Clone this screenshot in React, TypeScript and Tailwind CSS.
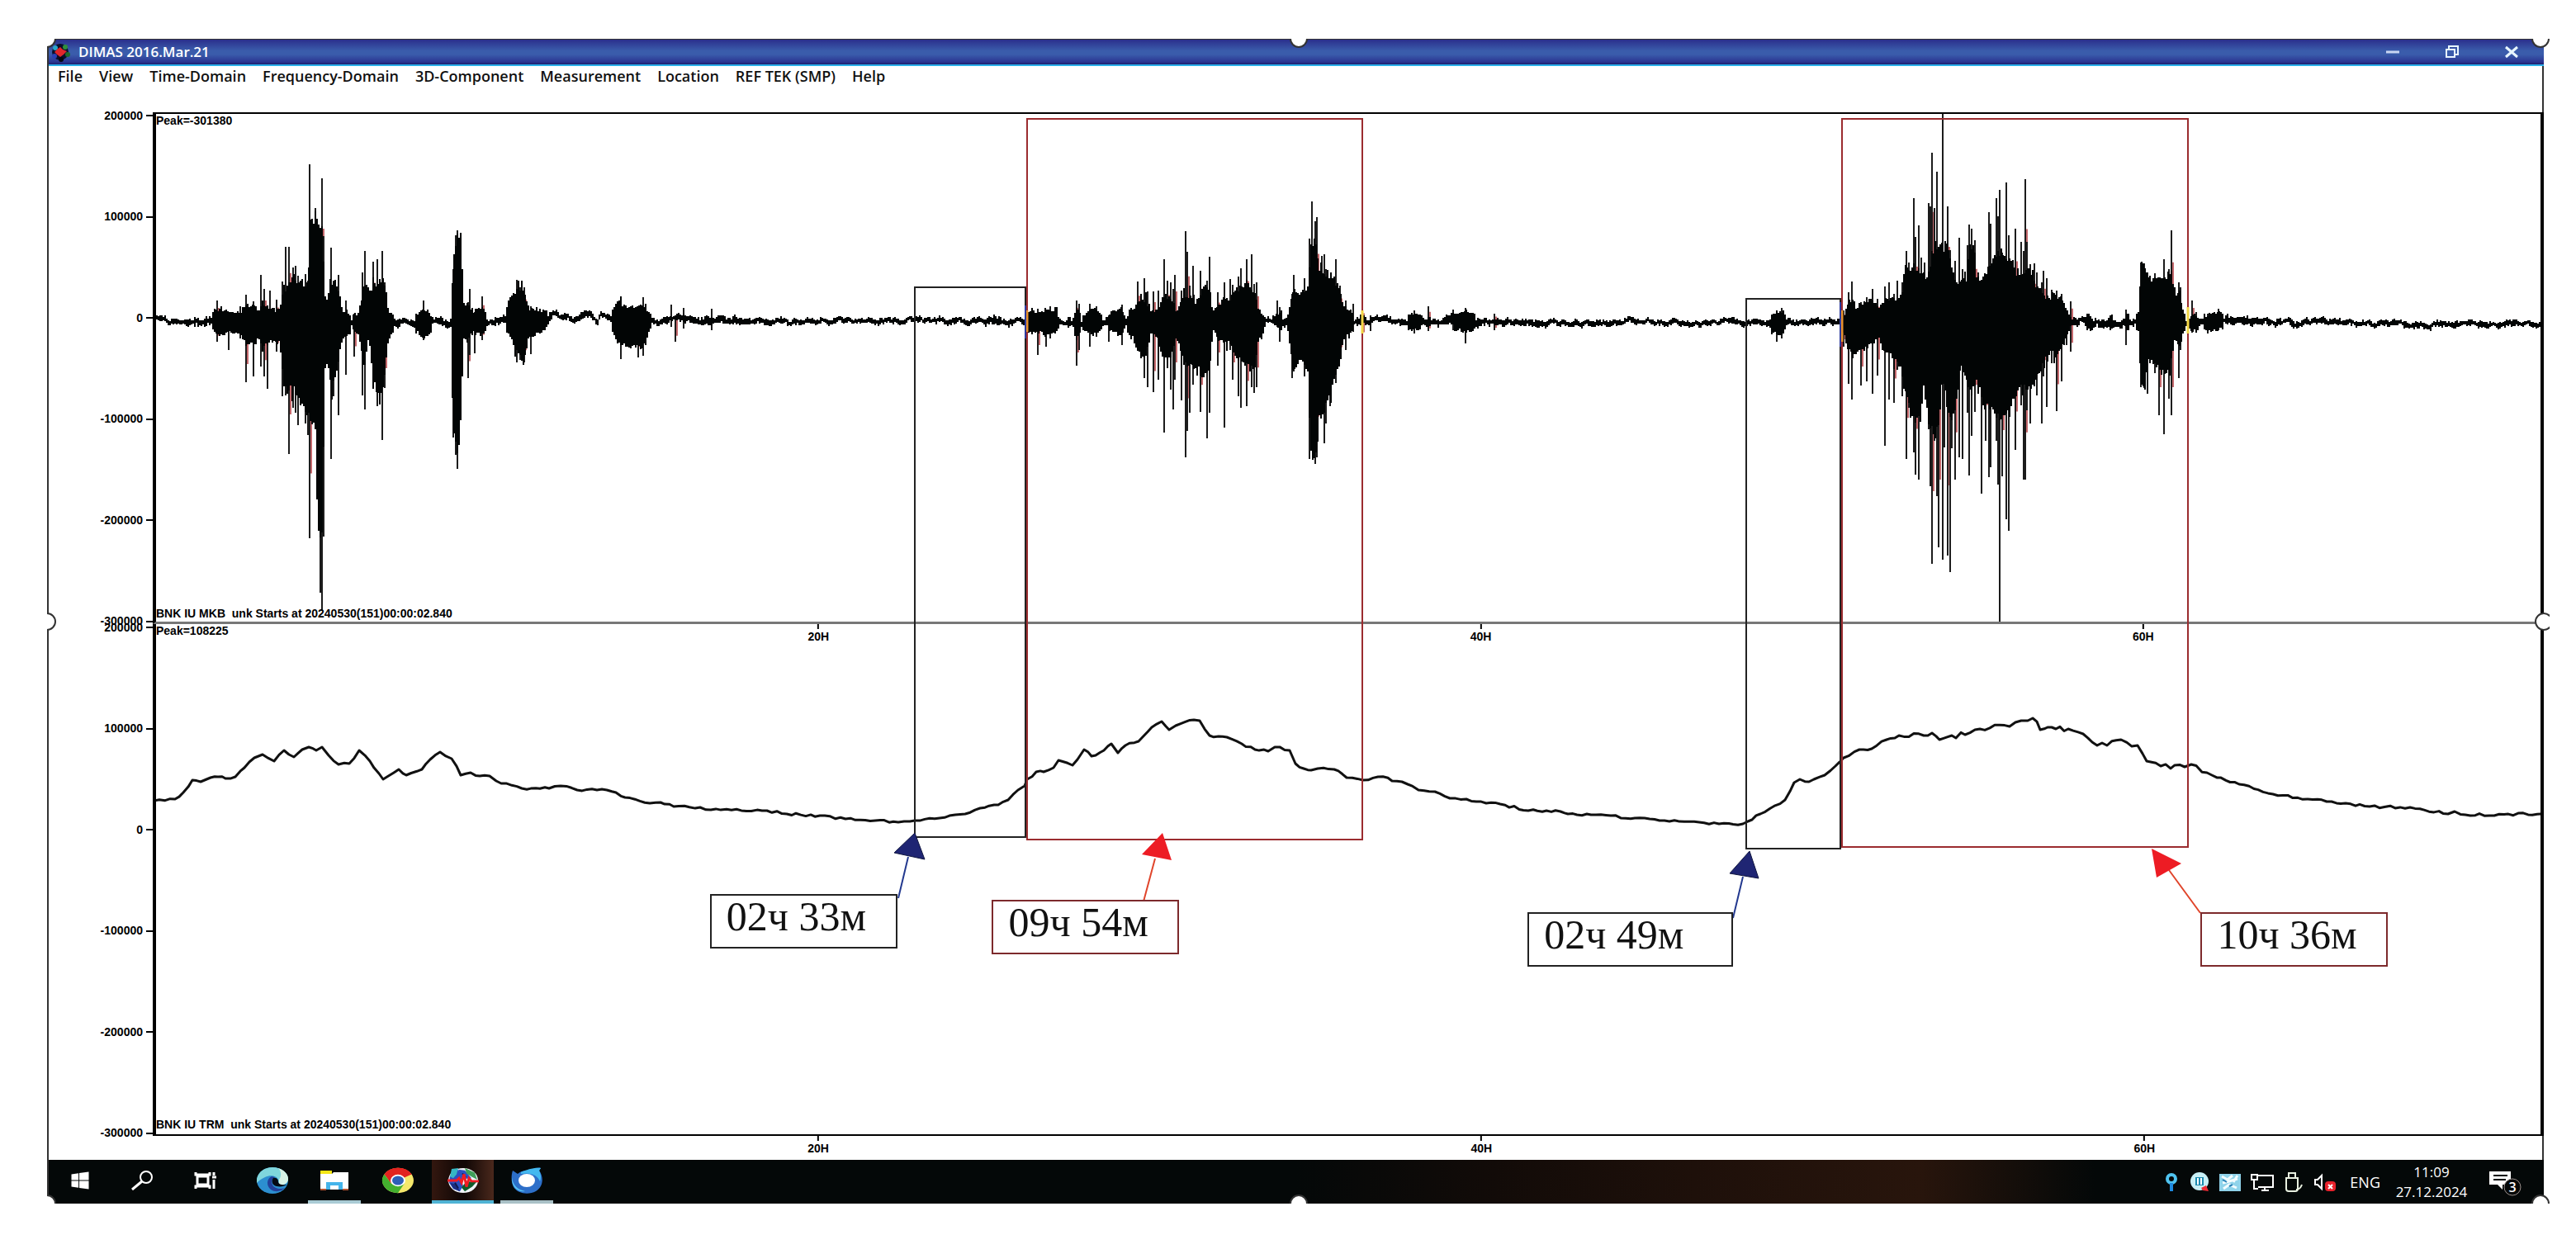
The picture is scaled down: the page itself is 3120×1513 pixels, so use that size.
import type { ReactNode } from 'react';
import { FaWindows } from 'react-icons/fa';

const MENU_ITEMS = [
  'File',
  'View',
  'Time-Domain',
  'Frequency-Domain',
  '3D-Component',
  'Measurement',
  'Location',
  'REF TEK (SMP)',
  'Help',
];

const Y_TICKS = ['200000', '100000', '0', '-100000', '-200000', '-300000'];
const X_TICKS = ['20H', '40H', '60H'];

type Range = [x: number, top: number, bottom: number];
type Point = [x: number, y: number];

// envelope of the solid part of the velocity trace
const ENVELOPE: Range[] = [
  [187, 384, 388], [205, 388, 392], [232, 385, 394], [256, 382, 396], [263, 378, 404], [277, 380, 400], [291, 380, 402],
  [298, 372, 414], [307, 372, 414], [313, 378, 408], [318, 374, 416], [326, 374, 412], [333, 378, 412], [339, 378, 412],
  [342, 362, 446], [347, 354, 470], [352, 346, 464], [356, 340, 466], [364, 346, 480], [373, 348, 500], [376, 280, 496],
  [382, 272, 516], [385, 274, 624], [391, 290, 634], [393, 364, 440], [398, 362, 440], [401, 350, 466], [407, 350, 450],
  [412, 364, 420], [416, 380, 408], [426, 384, 398], [434, 382, 402], [437, 370, 416], [441, 346, 450], [447, 353, 400],
  [451, 352, 452], [458, 350, 474], [463, 344, 474], [467, 352, 440], [470, 376, 412], [477, 386, 397], [500, 386, 396],
  [506, 383, 400], [513, 376, 410], [520, 380, 402], [525, 387, 395], [546, 386, 394], [549, 330, 516], [554, 286, 542],
  [559, 296, 486], [561, 366, 408], [567, 374, 404], [574, 380, 400], [583, 374, 404], [591, 386, 393], [612, 382, 394],
  [617, 364, 406], [626, 356, 420], [635, 356, 430], [641, 376, 406], [657, 378, 400], [664, 380, 394], [670, 379, 384],
  [682, 380, 386], [695, 385, 390], [713, 376, 384], [724, 388, 393], [728, 376, 382], [739, 382, 390], [747, 368, 414],
  [761, 374, 416], [779, 372, 418], [787, 381, 398], [792, 387, 392], [812, 382, 392], [840, 384, 394], [900, 384, 391],
  [960, 387, 392], [1040, 386, 390], [1120, 386, 391], [1190, 386, 390], [1201, 382, 394], [1214, 385, 392], [1240, 386, 392],
  [1246, 380, 398], [1265, 380, 402], [1279, 377, 400], [1284, 386, 394], [1300, 384, 398], [1304, 376, 408], [1310, 384, 396],
  [1320, 378, 402], [1329, 378, 402], [1338, 386, 393], [1346, 381, 398], [1358, 376, 404], [1364, 385, 395], [1372, 378, 406],
  [1378, 368, 424], [1388, 366, 430], [1393, 380, 400], [1402, 378, 408], [1408, 362, 430], [1418, 364, 430], [1424, 380, 408],
  [1430, 370, 420], [1436, 360, 436], [1444, 362, 440], [1449, 376, 440], [1456, 354, 450], [1465, 354, 446], [1469, 380, 398],
  [1474, 376, 406], [1482, 366, 414], [1490, 366, 412], [1498, 354, 430], [1512, 350, 438], [1519, 356, 444], [1525, 378, 408],
  [1530, 384, 400], [1538, 388, 392], [1547, 382, 396], [1553, 382, 398], [1559, 388, 392], [1563, 370, 424], [1567, 362, 440],
  [1578, 358, 432], [1585, 350, 450], [1587, 300, 540], [1594, 298, 548], [1598, 330, 496], [1606, 336, 488], [1613, 342, 466],
  [1621, 348, 444], [1628, 374, 408], [1640, 382, 396], [1652, 382, 396], [1657, 386, 392], [1695, 387, 392], [1706, 382, 398],
  [1722, 382, 396], [1735, 384, 393], [1750, 384, 394], [1775, 380, 400], [1800, 386, 394], [1840, 387, 394], [1880, 388, 394],
  [1940, 388, 393], [2000, 387, 391], [2060, 389, 394], [2137, 387, 392], [2143, 384, 396], [2153, 379, 404], [2163, 383, 397],
  [2168, 388, 392], [2228, 386, 393], [2234, 382, 404], [2239, 368, 422], [2247, 376, 424], [2256, 370, 420], [2266, 366, 414],
  [2276, 374, 408], [2283, 368, 424], [2294, 366, 430], [2303, 364, 440], [2307, 336, 470], [2318, 330, 500], [2326, 332, 500],
  [2330, 340, 456], [2335, 336, 500], [2343, 306, 520], [2349, 304, 500], [2353, 306, 450], [2358, 306, 480], [2364, 326, 500],
  [2370, 352, 480], [2375, 342, 440], [2382, 344, 456], [2386, 300, 470], [2392, 310, 460], [2395, 352, 454], [2402, 340, 484],
  [2411, 326, 490], [2418, 312, 500], [2427, 310, 502], [2436, 324, 480], [2442, 340, 470], [2450, 342, 460], [2456, 330, 466],
  [2463, 344, 460], [2472, 356, 444], [2481, 366, 424], [2492, 364, 424], [2499, 366, 414], [2504, 382, 400], [2512, 386, 394],
  [2520, 386, 393], [2530, 382, 398], [2540, 386, 394], [2558, 382, 397], [2566, 388, 392], [2576, 382, 398], [2586, 386, 395],
  [2591, 380, 402], [2593, 322, 464], [2598, 334, 464], [2603, 342, 424], [2612, 342, 440], [2622, 340, 450], [2630, 334, 430],
  [2634, 360, 408], [2640, 358, 416], [2644, 378, 402], [2650, 386, 394], [2656, 382, 400], [2664, 384, 396], [2674, 384, 400],
  [2688, 379, 397], [2700, 386, 395], [2720, 385, 395], [2760, 387, 394], [2820, 388, 393], [2900, 389, 394], [2980, 389, 395],
  [3079, 390, 394],
];

// single columns that reach past the envelope
const SPIKES: Range[] = [
  [263, 364, 414], [277, 378, 424], [291, 371, 410], [298, 357, 463], [307, 365, 456], [316, 333, 444], [320, 350, 456],
  [324, 373, 471], [327, 352, 404], [335, 363, 426], [342, 341, 480], [346, 299, 479], [350, 299, 550], [355, 324, 494],
  [358, 322, 500], [361, 334, 515], [370, 332, 513], [373, 340, 527], [375, 199, 652], [382, 252, 520], [388, 276, 718],
  [390, 216, 740], [392, 286, 650], [401, 300, 556], [404, 340, 480], [410, 333, 503], [419, 364, 454], [429, 380, 432],
  [439, 330, 479], [442, 304, 496], [452, 317, 466], [457, 314, 492], [463, 304, 533], [466, 342, 470], [513, 364, 412],
  [549, 326, 530], [552, 285, 551], [554, 279, 568], [558, 295, 490], [567, 366, 458], [569, 350, 430], [575, 378, 428],
  [584, 359, 412], [626, 339, 439], [630, 348, 436], [635, 348, 439], [643, 371, 429], [752, 359, 435], [773, 374, 433],
  [779, 360, 431], [813, 369, 396], [818, 382, 414], [828, 373, 398], [862, 374, 400], [1257, 374, 430], [1267, 376, 420],
  [1272, 371, 410], [1304, 364, 443], [1307, 368, 424], [1320, 368, 420], [1328, 371, 408], [1343, 382, 414], [1359, 369, 418],
  [1378, 341, 424], [1386, 337, 458], [1390, 353, 469], [1397, 353, 475], [1403, 352, 460], [1410, 314, 524], [1414, 340, 446],
  [1418, 342, 472], [1421, 350, 496], [1423, 333, 460], [1431, 352, 485], [1436, 280, 554], [1438, 305, 522], [1441, 346, 500],
  [1445, 322, 466], [1454, 328, 499], [1462, 340, 531], [1465, 311, 500], [1475, 354, 443], [1483, 342, 518], [1490, 338, 424],
  [1493, 345, 460], [1500, 335, 480], [1503, 325, 494], [1510, 314, 492], [1516, 308, 469], [1519, 344, 476], [1522, 342, 469],
  [1547, 364, 396], [1550, 372, 414], [1565, 356, 458], [1567, 333, 450], [1580, 337, 456], [1586, 289, 556], [1589, 244, 542],
  [1593, 268, 562], [1595, 263, 554], [1601, 310, 492], [1604, 308, 537], [1606, 326, 513], [1611, 340, 492], [1618, 314, 464],
  [1623, 346, 434], [1630, 364, 424], [1639, 368, 402], [1650, 374, 408], [1660, 382, 401], [1713, 376, 404], [1730, 371, 401],
  [1760, 375, 400], [1775, 373, 416], [1810, 380, 400], [2152, 376, 414], [2158, 373, 410], [2233, 376, 420], [2239, 354, 465],
  [2243, 341, 484], [2254, 366, 467], [2261, 360, 462], [2268, 350, 477], [2274, 362, 455], [2283, 347, 540], [2288, 342, 484],
  [2294, 356, 488], [2298, 340, 448], [2304, 342, 480], [2309, 304, 556], [2312, 318, 494], [2318, 240, 548], [2320, 287, 575],
  [2324, 273, 581], [2327, 312, 470], [2331, 318, 446], [2336, 246, 520], [2338, 250, 589], [2340, 185, 683], [2343, 252, 534],
  [2346, 208, 601], [2348, 304, 663], [2353, 138, 678], [2355, 306, 542], [2359, 250, 673], [2362, 303, 693], [2364, 326, 543],
  [2368, 316, 581], [2373, 288, 554], [2377, 326, 556], [2383, 297, 500], [2385, 272, 576], [2388, 277, 528], [2392, 291, 499],
  [2396, 330, 454], [2400, 340, 598], [2405, 334, 534], [2409, 257, 578], [2411, 271, 566], [2418, 240, 534], [2420, 262, 587],
  [2422, 230, 753], [2425, 306, 577], [2430, 221, 629], [2433, 285, 643], [2441, 277, 545], [2448, 293, 491], [2451, 304, 581],
  [2453, 217, 581], [2455, 293, 497], [2459, 320, 513], [2464, 319, 468], [2467, 330, 479], [2473, 342, 513], [2475, 328, 456],
  [2479, 337, 493], [2485, 351, 440], [2491, 352, 498], [2497, 356, 462], [2503, 380, 418], [2508, 365, 426], [2575, 375, 418],
  [2593, 318, 469], [2597, 319, 470], [2601, 330, 477], [2610, 331, 452], [2615, 336, 503], [2621, 314, 526], [2627, 326, 483],
  [2630, 279, 503], [2639, 342, 458], [2641, 348, 424], [2655, 364, 403], [2660, 378, 402], [2674, 380, 404], [2687, 374, 400],
];

const TREMOR: Point[] = [
  [187, 970], [212, 968], [222, 960], [233, 945], [243, 947], [255, 942], [264, 941], [273, 943], [285, 941], [296, 930],
  [308, 918], [318, 914], [332, 922], [344, 909], [356, 917], [366, 908], [374, 905], [383, 909], [390, 905], [398, 915],
  [410, 926], [423, 925], [435, 909], [448, 922], [464, 944], [483, 932], [492, 939], [511, 932], [521, 920], [533, 911],
  [547, 919], [558, 939], [570, 936], [581, 940], [593, 940], [601, 946], [632, 955], [665, 955], [679, 952], [699, 957],
  [735, 957], [757, 966], [787, 973], [800, 972], [816, 977], [848, 978], [861, 981], [929, 982], [953, 986], [993, 988],
  [1024, 992], [1060, 994], [1088, 996], [1102, 995], [1138, 991], [1169, 986], [1187, 979], [1209, 975], [1221, 969], [1233, 957],
  [1241, 952], [1244, 944], [1255, 935], [1264, 935], [1276, 930], [1282, 921], [1299, 927], [1305, 920], [1313, 908], [1322, 916],
  [1337, 909], [1346, 901], [1354, 912], [1363, 903], [1379, 898], [1395, 881], [1407, 874], [1416, 884], [1424, 879], [1446, 872],
  [1453, 873], [1465, 891], [1486, 893], [1504, 901], [1520, 908], [1536, 910], [1544, 905], [1562, 909], [1569, 925], [1579, 931],
  [1588, 933], [1596, 931], [1616, 932], [1631, 942], [1651, 945], [1669, 941], [1698, 947], [1718, 957], [1738, 959], [1756, 967],
  [1776, 968], [1800, 973], [1817, 974], [1851, 982], [1890, 983], [1899, 986], [1933, 987], [2016, 994], [2082, 998], [2111, 998],
  [2117, 995], [2132, 986], [2162, 969], [2173, 948], [2180, 944], [2191, 947], [2210, 939], [2223, 928], [2233, 918], [2252, 908],
  [2267, 907], [2285, 896], [2300, 891], [2330, 891], [2340, 888], [2349, 896], [2364, 891], [2380, 890], [2398, 883], [2434, 880],
  [2448, 873], [2456, 873], [2462, 870], [2471, 884], [2480, 881], [2490, 883], [2505, 883], [2523, 889], [2534, 899], [2552, 903],
  [2569, 896], [2589, 903], [2600, 922], [2617, 928], [2646, 929], [2654, 926], [2679, 939], [2712, 950], [2753, 962], [2795, 968],
  [2870, 977], [2919, 978], [2965, 986], [2973, 983], [2986, 987], [3079, 986],
];

function makeRandom(seed: number) {
  let s = seed;
  return () => {
    s = (s * 1664525 + 1013904223) % 4294967296;
    return s / 4294967296;
  };
}

function buildVelocityPath() {
  const rand = makeRandom(21);
  let d = '';
  let k = 0;
  let drift = 0;
  for (let x = 188; x < 3078; x += 2) {
    while (k < ENVELOPE.length - 2 && ENVELOPE[k + 1][0] <= x) k++;
    const [x0, t0, b0] = ENVELOPE[k];
    const [x1, t1, b1] = ENVELOPE[k + 1];
    const f = (x - x0) / (x1 - x0);
    const top = t0 + (t1 - t0) * f;
    const bottom = b0 + (b1 - b0) * f;
    const size = bottom - top;
    drift = drift * 0.7 + (rand() - 0.5) * 4;
    if (size <= 14) {
      // quiet stretches are a thin wandering line
      const mid = (top + bottom) / 2 + drift;
      const half = 2 + rand() * size * 0.4;
      d += `M${x} ${Math.round(mid - half)}V${Math.round(mid + half)}`;
      continue;
    }
    const burst = rand() > 0.78 ? 0.22 : 0.06;
    const up = rand() * Math.min(16, size * burst + 3);
    const down = rand() * Math.min(22, size * burst + 3);
    d += `M${x} ${Math.round(top - up)}V${Math.round(bottom + down)}`;
  }
  return d;
}

function buildTremorPath() {
  const rand = makeRandom(5);
  let d = `M${TREMOR[0][0]} ${TREMOR[0][1]}`;
  for (let i = 1; i < TREMOR.length; i++) {
    const [x0, y0] = TREMOR[i - 1];
    const [x1, y1] = TREMOR[i];
    const steps = Math.max(1, Math.round((x1 - x0) / 6));
    const wobble = x0 > 2290 && x0 < 2660 ? 7 : 3;
    for (let j = 1; j <= steps; j++) {
      const f = j / steps;
      const noise = j < steps ? (rand() - 0.5) * wobble : 0;
      d += `L${Math.round(x0 + (x1 - x0) * f)} ${(y0 + (y1 - y0) * f + noise).toFixed(1)}`;
    }
  }
  return d;
}

const spikePath = (list: Range[]) => list.map(([x, a, b]) => `M${x} ${a}V${b}`).join('');

const VELOCITY_PATH = buildVelocityPath();
const TREMOR_PATH = buildTremorPath();
const SPIKE_PATH = spikePath(SPIKES);
const RED_PATH = spikePath(
  SPIKES.filter((_, i) => i % 3 === 0).map(([x, a, b]) => [x + 2, a + (390 - a) * 0.35, b - (b - 390) * 0.3]),
);

function YAxis() {
  return (
    <div className="flex w-[126px] shrink-0 flex-col justify-between pt-1 pb-[3px]">
      {Y_TICKS.map((tick) => (
        <div key={tick} className="flex h-0 items-center justify-end gap-1">
          <span>{tick}</span>
          <span className="h-[2px] w-2 bg-black" />
        </div>
      ))}
    </div>
  );
}

function XAxis() {
  return (
    <div className="flex">
      {X_TICKS.map((tick) => (
        <div key={tick} className="flex w-[27.78%] justify-end">
          <div className="flex translate-x-1/2 flex-col items-center">
            <span className="h-[6px] w-[2px] bg-black" />
            <span className="leading-[18px]">{tick}</span>
          </div>
        </div>
      ))}
    </div>
  );
}

interface TraceProps {
  peak: string;
  station: string;
  viewBox: string;
  frame: string;
  children: ReactNode;
  axis?: ReactNode;
}

function Trace({ peak, station, viewBox, frame, children, axis }: TraceProps) {
  return (
    <section className="flex">
      <YAxis />
      <div className={`relative flex flex-1 flex-col justify-between border-r-4 border-l-4 border-black ${frame}`}>
        <svg className="absolute inset-0 h-full w-full" viewBox={viewBox} preserveAspectRatio="none" aria-hidden="true">
          {children}
        </svg>
        <div className="relative">
          {axis && <div className="absolute inset-x-0 top-0">{axis}</div>}
          <div className="leading-[16px]">{peak}</div>
        </div>
        <div className="relative leading-[16px] whitespace-pre">{station}</div>
      </div>
    </section>
  );
}

function Annotations() {
  return (
    <div className="absolute inset-y-0 right-0 left-[126px]">
      <svg className="absolute inset-0 h-full w-full" viewBox="185 136 2896 1240" preserveAspectRatio="none" aria-hidden="true">
        <g fill="none" strokeWidth="2">
          <path d="M1108 348H1242V1014H1108Z M2115 362H2229V1028H2115Z" stroke="#222" />
          <path d="M1244 144H1650V1017H1244Z M2231 144H2650V1026H2231Z" stroke="#9b2c2f" />
          <path d="M1244 376V402M2231 376V414" stroke="#e8912d" strokeWidth="3" />
          <path d="M1650 376V404M2650 372V404" stroke="#f2d544" strokeWidth="3" />
          <path d="M1242 370V410M2229 366V420" stroke="#2c3a9c" />
          <path d="M1100 1038L1088 1088M2111 1062L2099 1112" stroke="#23398f" />
          <path d="M1399 1040L1385 1092M2627 1054L2665 1106" stroke="#e0452b" />
        </g>
        <path d="M1108 1009L1083 1033L1120 1041Z M2119 1031L2095 1058L2130 1064Z" fill="#1f2573" stroke="#10163f" />
        <path d="M1408 1009L1383 1035L1419 1042Z M2606 1028L2642 1046L2612 1063Z" fill="#ed1c24" />
      </svg>
      <Duration className="top-[947px] left-[23.3%] w-[227px] border-[#222]">02ч 33м</Duration>
      <Duration className="top-[954px] left-[35.1%] w-[227px] border-[#7d2a2c]">09ч 54м</Duration>
      <Duration className="top-[969px] left-[57.5%] w-[249px] border-[#222]">02ч 49м</Duration>
      <Duration className="top-[969px] left-[85.65%] w-[227px] border-[#7d2a2c]">10ч 36м</Duration>
    </div>
  );
}

function Duration({ className, children }: { className: string; children: ReactNode }) {
  return (
    <div
      className={`absolute h-[66px] border-2 bg-white pl-[18px] font-['Liberation_Serif',serif] text-[50px] leading-[50px] font-normal whitespace-nowrap text-[#111] ${className}`}
    >
      {children}
    </div>
  );
}

function GlobeIcon({ className }: { className: string }) {
  return (
    <svg className={className} viewBox="0 0 40 34" preserveAspectRatio="none" aria-hidden="true">
      <ellipse cx="20" cy="17" rx="18" ry="16" fill="#f1f4f8" />
      <path d="M4 12L8 5L12 2L20 9L18 17L20 24L16 31L8 28L3 20Z" fill="#2a50c0" />
      <path d="M4 12L6 2L14 1L12 9L8 14Z" fill="#35b7c4" />
      <path d="M14 3L22 4L30 14L22 15L17 9Z" fill="#2a50c0" />
      <path d="M22 1L34 7L37 16L30 12L24 8Z" fill="#3f9f5a" />
      <path d="M24 18L36 19L31 25L22 31L18 26Z" fill="#0f5c2b" />
      <path d="M4 20L12 22L16 31L8 27Z" fill="#1b2c80" />
      <path d="M19 8L23 13M10 20L14 27" stroke="#101a4d" strokeWidth="2" />
      <path d="M1 17H12L15 14L18 20L21 9L24 25L27 14L30 18H39" fill="none" stroke="#ef1c24" strokeWidth="3" />
    </svg>
  );
}

function DimasLogo() {
  return (
    <svg className="h-6 w-7" viewBox="0 0 28 24" aria-hidden="true">
      <circle cx="14" cy="12" r="10" fill="#0a0f2c" />
      <circle cx="8" cy="7" r="3" fill="#2aa6c9" />
      <circle cx="20" cy="6" r="3" fill="#2f8f3c" />
      <circle cx="23" cy="15" r="3" fill="#1f6a2a" />
      <circle cx="7" cy="17" r="3" fill="#2a3fb5" />
      <circle cx="15" cy="21" r="3" fill="#05070f" />
      <path d="M7 12L11 8L14 6L17 9L22 11L18 15L14 18L10 15Z" fill="#e0262b" />
    </svg>
  );
}

function EdgeIcon() {
  return (
    <svg className="h-8 w-10" viewBox="0 0 40 32" preserveAspectRatio="none" aria-hidden="true">
      <ellipse cx="20" cy="16" rx="19" ry="16" fill="#2c8fd0" />
      <path d="M1 14C3 5 11 0 20 0C31 0 39 7 39 14C39 20 33 22 29 21C26 20 28 18 27 15C25 10 17 9 11 12C6 14 3 17 1 19Z" fill="#7fd6dc" />
      <path d="M27 1C35 4 39 9 39 14C39 20 33 22 29 21C27 20 28 18 28 15C31 11 31 5 27 1Z" fill="#d8f3e6" />
      <path d="M19 11C13 14 12 22 18 27C24 31 31 29 35 25C30 27 22 26 20 21C18 17 20 14 23 12Z" fill="#23409a" />
      <path d="M21 13C18 17 20 22 25 23C30 24 34 23 38 21C32 22 27 21 27 17C27 14 24 12 21 13Z" fill="#050a14" />
    </svg>
  );
}

function ExplorerIcon() {
  return (
    <svg className="h-6 w-9" viewBox="0 0 36 24" preserveAspectRatio="none" aria-hidden="true">
      <path d="M1 0H15V6H1Z" fill="#f5e616" />
      <path d="M1 4H15L17 2H35V23H1Z" fill="#fff" />
      <path d="M8 23V14H28V23H23V18H13V23Z" fill="#44b4ea" />
      <path d="M1 22H8V24H1ZM28 22H35V24H28Z" fill="#b5532f" />
    </svg>
  );
}

function ChromeIcon() {
  return (
    <svg className="h-8 w-10" viewBox="0 0 40 40" preserveAspectRatio="none" aria-hidden="true">
      <circle cx="20" cy="20" r="19" fill="#f5e86b" />
      <path d="M20 20L3.500 10.500A19 19 0 0 1 36.500 10.500Z" fill="#e2231f" />
      <path d="M20 11H36.800A19 19 0 0 0 3.500 10.500L12 25Z" fill="#e2231f" />
      <path d="M3.500 10.500A19 19 0 0 0 20 39L28 24L12 25Z" fill="#43b02f" />
      <circle cx="20" cy="20" r="9" fill="#fff" />
      <circle cx="20" cy="20" r="7" fill="#2d5fb8" />
    </svg>
  );
}

function ThunderbirdIcon() {
  return (
    <svg className="h-8 w-10" viewBox="0 0 40 32" preserveAspectRatio="none" aria-hidden="true">
      <path d="M3 4L9 8C14 3 22 4 25 3C29 1 35 0 37 1L35 4C41 12 40 24 31 29C22 34 9 32 4 24C1 18 1 10 3 4Z" fill="#2d6fc9" />
      <path d="M13 6C20 3 29 0 37 1L35 4C37 8 38 13 36 17C33 10 26 6 13 8Z" fill="#43b8ef" />
      <path d="M2 12C3 22 9 27 18 29C10 31 1 24 2 12Z" fill="#55c4f4" />
      <ellipse cx="20" cy="16" rx="10" ry="8" fill="#fff" />
    </svg>
  );
}

function SearchIcon() {
  return (
    <svg className="h-6 w-7" viewBox="0 0 28 24" fill="none" stroke="#fff" strokeWidth="2" aria-hidden="true">
      <circle cx="18" cy="8" r="7" />
      <path d="M13 13L1 23" strokeWidth="3" />
    </svg>
  );
}

function TaskViewIcon() {
  return (
    <svg className="h-[22px] w-7" viewBox="0 0 28 22" fill="none" stroke="#fff" strokeWidth="2" aria-hidden="true">
      <path d="M4 6H17V16H4ZM2 1V4H19V1M2 21V18H19V21M24 1V5M24 10V21" strokeWidth="3" />
      <path d="M22 7H27" strokeWidth="3" />
    </svg>
  );
}

interface TaskButtonProps {
  label: string;
  className: string;
  children: ReactNode;
}

function TaskButton({ label, className, children }: TaskButtonProps) {
  return (
    <button type="button" aria-label={label} className={`flex h-full items-center justify-center border-b-4 ${className}`}>
      {children}
    </button>
  );
}

function Tray() {
  return (
    <div className="flex h-full items-center pr-[26px] text-white">
      <div className="flex items-center gap-3">
        <svg className="h-6 w-5" viewBox="0 0 20 24" fill="none" stroke="#4fc3f0" strokeWidth="4" aria-hidden="true">
          <circle cx="10" cy="8" r="5" />
          <path d="M10 13V23" stroke="#1e8be0" />
        </svg>
        <svg className="h-6 w-6" viewBox="0 0 24 24" aria-hidden="true">
          <circle cx="12" cy="11" r="11" fill="#c8f0f6" />
          <path d="M7 6H17V16H7Z" fill="#1d8bb0" />
          <path d="M10 7V15M14 7V15" stroke="#fff" strokeWidth="2" />
          <path d="M14 19L20 16L23 23L16 22Z" fill="#ee2b34" />
        </svg>
        <svg className="h-6 w-[26px]" viewBox="0 0 26 24" aria-hidden="true">
          <path d="M0 2H26V23H0Z" fill="#8fd3ea" />
          <path d="M3 5L10 9L16 4M4 13L12 11L22 8M5 20L12 15L21 19M22 4L17 12" fill="none" stroke="#f2fcff" strokeWidth="3" />
          <path d="M12 17L16 15M4 9L9 12" stroke="#2b83b8" strokeWidth="2" />
        </svg>
        <svg className="h-6 w-7" viewBox="0 0 28 24" fill="none" stroke="#fff" strokeWidth="2" aria-hidden="true">
          <path d="M9 4H27V18H9M13 22H22M17 18V22M1 3H8V9H1ZM4 9V20H9" />
        </svg>
        <svg className="h-7 w-6" viewBox="0 0 24 28" fill="none" stroke="#e8f0e0" strokeWidth="2" aria-hidden="true">
          <path d="M6 9V3H14V9M3 9H17V22Q17 25 14 25H6Q3 25 3 22ZM15 23Q20 23 22 17" />
        </svg>
        <svg className="h-6 w-7" viewBox="0 0 28 24" aria-hidden="true">
          <path d="M2 9H5L10 4V20L5 15H2Z" fill="none" stroke="#fff" strokeWidth="2" />
          <rect x="14" y="11" width="13" height="12" rx="4" fill="#e8222c" />
          <path d="M18 15L23 20M23 15L18 20" stroke="#fff" strokeWidth="2" />
        </svg>
      </div>
      <button type="button" className="ml-4 text-[18px] leading-6">
        ENG
      </button>
      <button type="button" className="ml-4 w-[92px] text-center text-[17px] leading-6">
        <span className="block">11:09</span>
        <span className="block">27.12.2024</span>
      </button>
      <button type="button" aria-label="Notifications" className="ml-6">
        <svg className="h-[34px] w-10" viewBox="0 0 40 34" aria-hidden="true">
          <path d="M0 4H26V20H16V26L10 20H0Z" fill="#fff" />
          <path d="M5 9H22M5 14H20" stroke="#050808" strokeWidth="2" />
          <circle cx="28" cy="23" r="10" fill="#050808" stroke="#9a8f8c" strokeWidth="1" />
          <text x="28" y="29" textAnchor="middle" fontSize="16" fontWeight="600" fill="#fff">
            3
          </text>
        </svg>
      </button>
    </div>
  );
}

function Taskbar() {
  return (
    <footer className="flex h-[53px] items-center justify-between bg-[#040808] bg-[linear-gradient(90deg,transparent_50%,#120b08_58%,#1e100a_66%,#28150c_75%,transparent_82%)]">
      <div className="flex h-full">
        <TaskButton label="Start" className="w-[75px] border-transparent">
          <FaWindows className="h-6 w-[26px] text-white" />
        </TaskButton>
        <TaskButton label="Search" className="w-[78px] border-transparent">
          <SearchIcon />
        </TaskButton>
        <TaskButton label="Task view" className="w-[74px] border-transparent">
          <TaskViewIcon />
        </TaskButton>
        <TaskButton label="Microsoft Edge" className="w-[87px] border-transparent">
          <EdgeIcon />
        </TaskButton>
        <TaskButton label="File Explorer" className="w-[64px] border-[#a9cbd4]">
          <ExplorerIcon />
        </TaskButton>
        <TaskButton label="Google Chrome" className="w-[86px] border-transparent pl-1">
          <ChromeIcon />
        </TaskButton>
        <TaskButton label="DIMAS" className="w-[75px] border-[#4fb3d4] bg-[linear-gradient(90deg,#33170f,#120806_45%,#120806_55%,#4a281c)]">
          <GlobeIcon className="h-8 w-10" />
        </TaskButton>
        <TaskButton label="Thunderbird" className="ml-2 w-[64px] border-[#a9c0c6]">
          <ThunderbirdIcon />
        </TaskButton>
      </div>
      <Tray />
    </footer>
  );
}

const HANDLES = [
  'top-0 left-0 -translate-x-1/2 -translate-y-1/2',
  'top-0 left-1/2 -translate-x-1/2 -translate-y-1/2',
  'top-0 right-0 -translate-y-1/2',
  'top-1/2 left-0 -translate-x-1/2 -translate-y-1/2',
  'top-1/2 right-0 translate-x-1 -translate-y-1/2',
  'bottom-0 left-0 -translate-x-1/2 translate-y-1/2',
  'bottom-0 left-1/2 -translate-x-1/2 translate-y-1/2',
  'bottom-0 right-0 translate-y-1/2',
];

// grips round the selected window, cut off at its outer edge
function SelectionHandles() {
  return (
    <div className="pointer-events-none absolute -top-px -right-[7px] bottom-0 -left-[2px] overflow-hidden">
      {HANDLES.map((position) => (
        <span key={position} className={`absolute size-[22px] rounded-full border-2 border-[#333] bg-white ${position}`} />
      ))}
    </div>
  );
}

export default function App() {
  return (
    <main className="min-h-screen bg-white pt-[47px] pr-[39px] pl-[57px] font-['Open_Sans','Noto_Sans',sans-serif]">
      <div className="relative border-t border-l-2 border-[#333] bg-white">
        <header className="flex h-[32px] items-center justify-between border-b-2 border-[#2bb0ea] bg-[linear-gradient(#2b2f8c,#3a5cab_45%,#3a5cab_60%,#2b3592_90%,#1d1f6b)] text-white">
          <div className="flex items-center gap-2">
            <DimasLogo />
            <h1 className="text-[17px] leading-6 font-semibold">DIMAS 2016.Mar.21</h1>
          </div>
          <div className="flex items-center gap-[56px] pr-[31px]">
            <button type="button" aria-label="Minimize">
              <svg className="h-4 w-4" viewBox="0 0 16 16" aria-hidden="true">
                <path d="M0 8H16" stroke="#c9d6f2" strokeWidth="3" />
              </svg>
            </button>
            <button type="button" aria-label="Restore">
              <svg className="h-4 w-4" viewBox="0 0 16 16" fill="none" stroke="#e8f6ff" strokeWidth="2" aria-hidden="true">
                <path d="M1 5H11V14H1ZM4 4V1H15V11H12" />
              </svg>
            </button>
            <button type="button" aria-label="Close">
              <svg className="h-4 w-4" viewBox="0 0 16 16" stroke="#e8f6ff" strokeWidth="3" aria-hidden="true">
                <path d="M1 2L15 14M15 2L1 14" />
              </svg>
            </button>
          </div>
        </header>

        <nav className="flex h-[56px] items-start gap-5 border-r-2 border-[#333] pl-[11px] text-[18px] leading-6 font-semibold text-[#111]">
          {MENU_ITEMS.map((item) => (
            <button key={item} type="button">
              {item}
            </button>
          ))}
        </nav>

        <div className="font-['Liberation_Sans',Arial,sans-serif] text-[14px] font-bold text-black">
          <div className="relative">
            <Trace
              peak="Peak=-301380"
              station="BNK IU MKB  unk Starts at 20240530(151)00:00:02.840"
              viewBox="189 138 2888 615"
              frame="h-[620px] border-t-2 border-b-[3px] border-b-[#777] pb-[2px]"
            >
              <path d={RED_PATH} stroke="#c4686c" strokeWidth="2" />
              <path d={SPIKE_PATH} stroke="#1c1c1c" strokeWidth="2" />
              <path d={VELOCITY_PATH} stroke="#020505" strokeWidth="2" shapeRendering="crispEdges" />
            </Trace>
            <Trace
              peak="Peak=108225"
              station="BNK IU TRM  unk Starts at 20240530(151)00:00:02.840"
              viewBox="189 756 2888 618"
              frame="h-[620px] border-b-2 pb-1"
              axis={<XAxis />}
            >
              <path d={TREMOR_PATH} fill="none" stroke="#111" strokeWidth="3" strokeLinejoin="round" />
            </Trace>
            <Annotations />
          </div>
          <div className="h-[29px] border-r-2 border-[#333] pl-[129px]">
            <XAxis />
          </div>
        </div>

        <Taskbar />
        <SelectionHandles />
      </div>
    </main>
  );
}
